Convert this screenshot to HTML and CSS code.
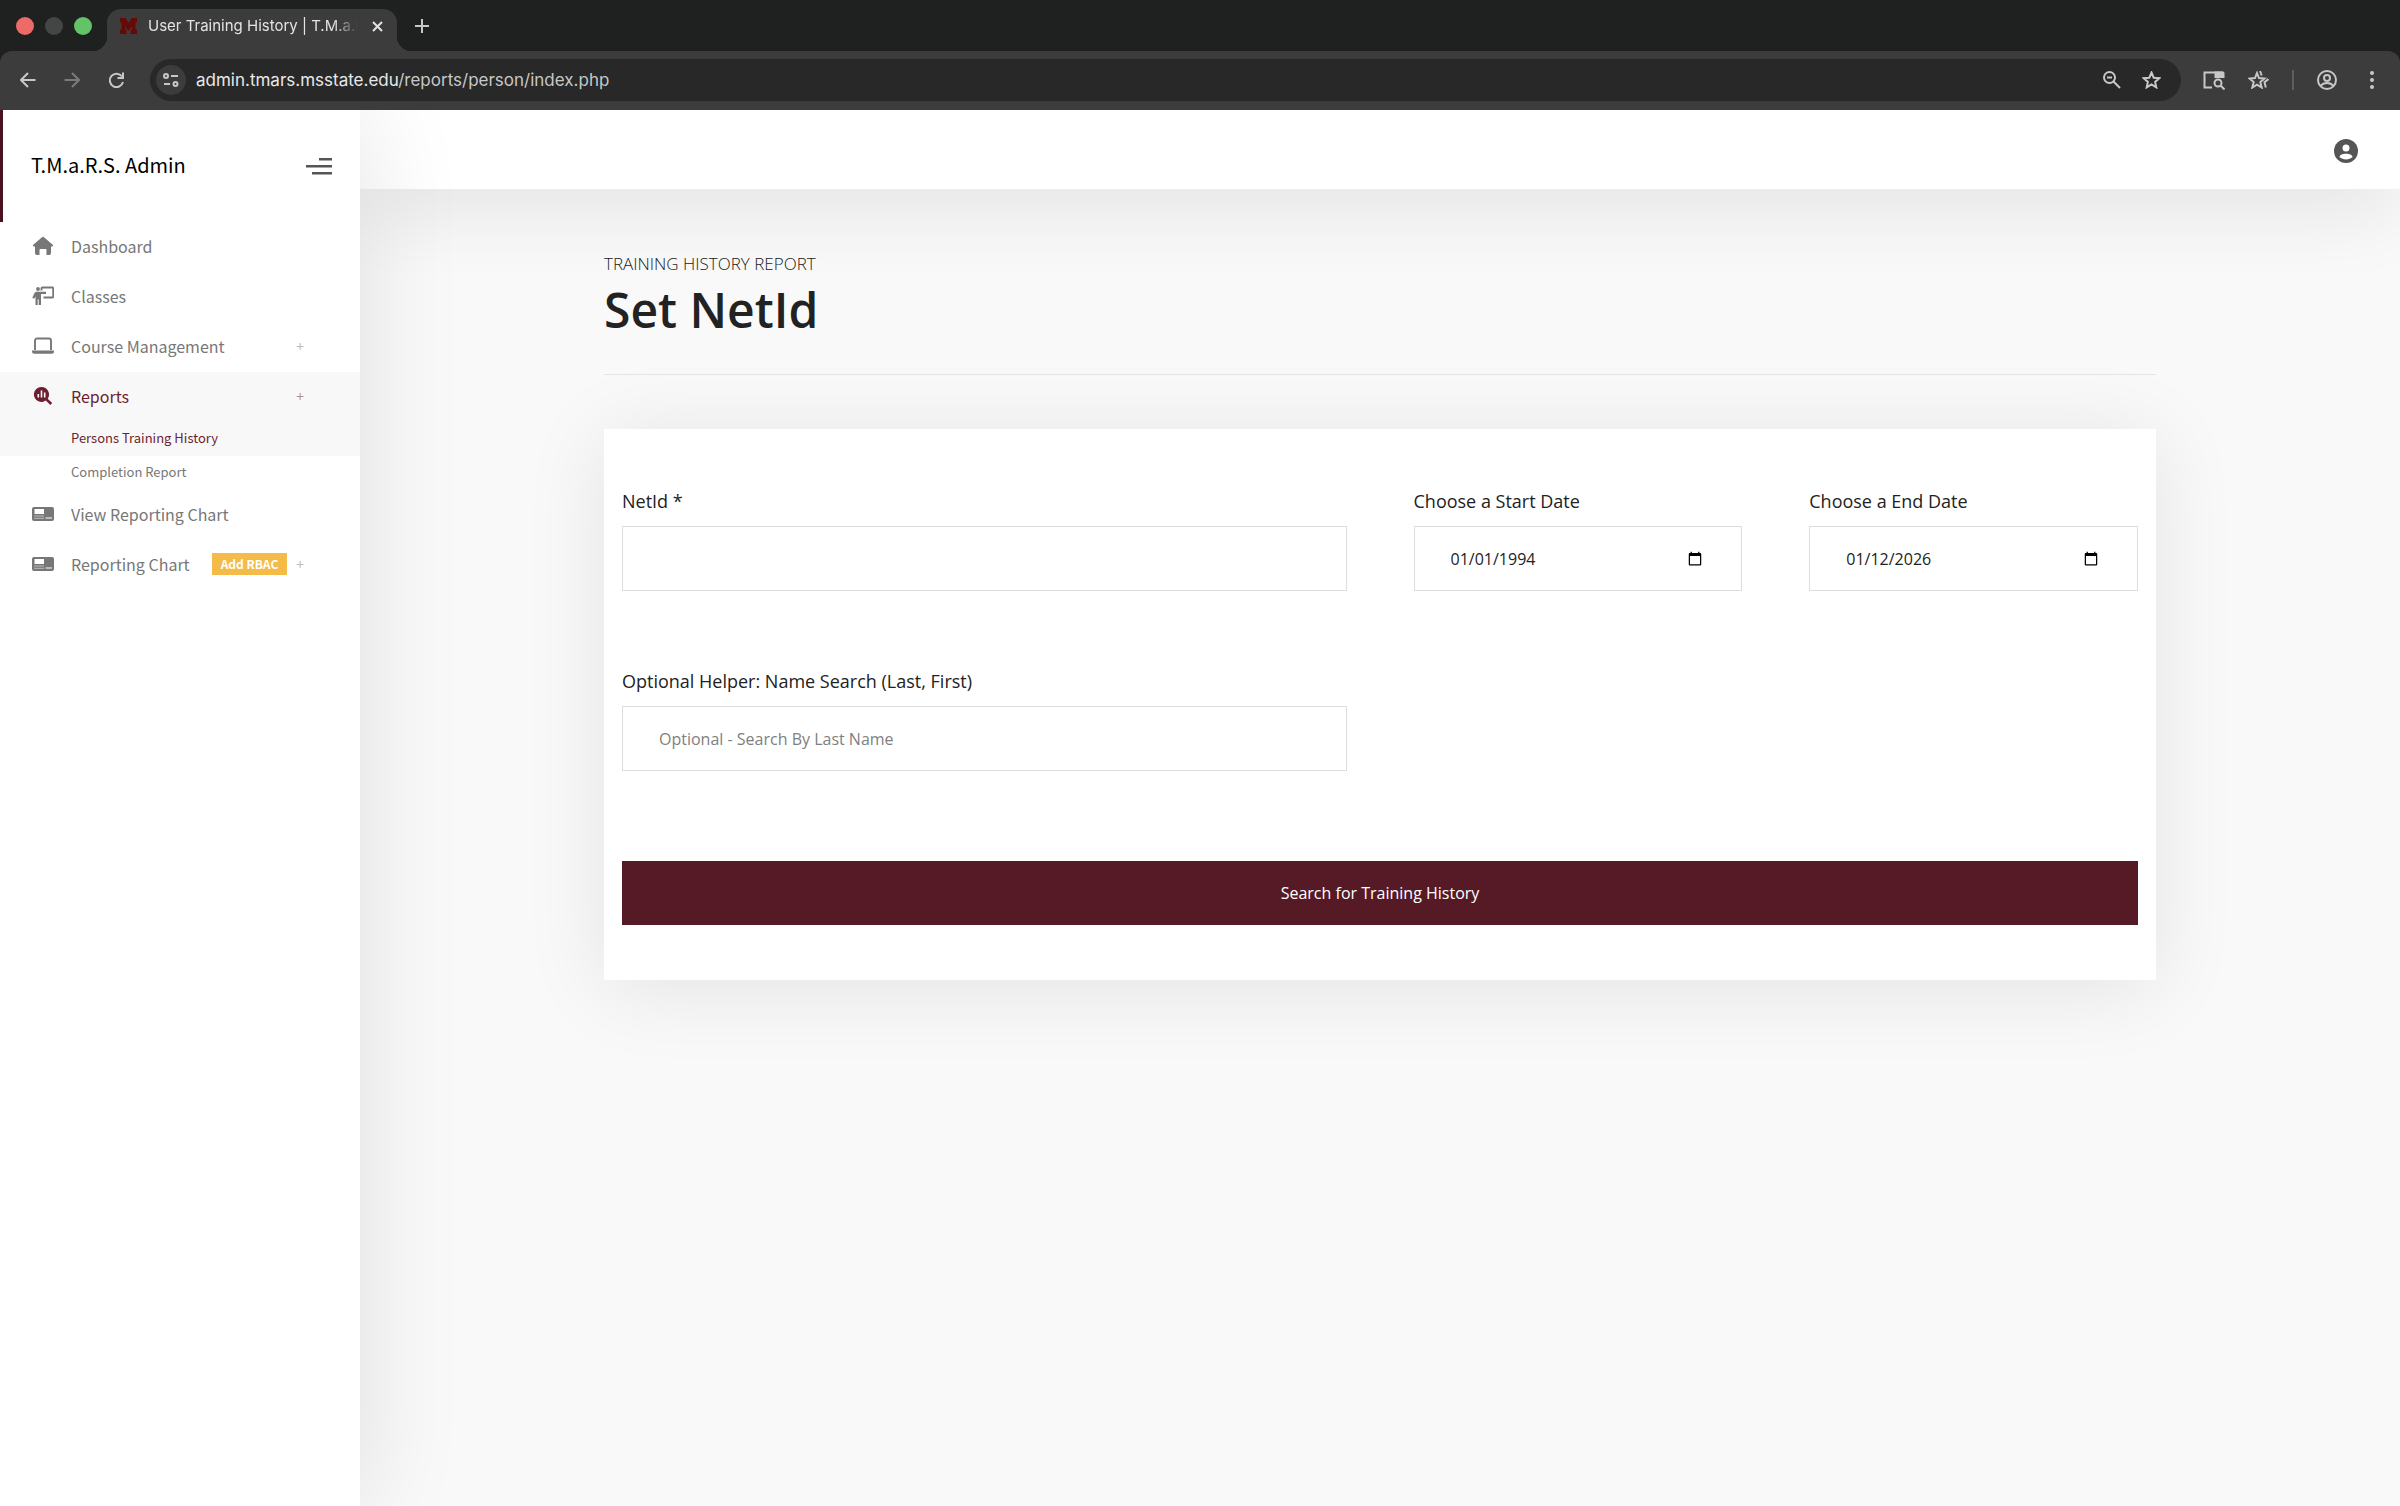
FILE: index.html
```html
<!DOCTYPE html>
<html lang="en-US">
<head>
    <meta charset="UTF-8">
    <meta name="viewport" content="width=device-width, initial-scale=1.0">
    <title>User Training History | T.M.a.R.S.</title>
    <link rel="stylesheet" href="styles.css">
</head>
<body>
    <div class="browser">
        <div class="tab-strip">
            <div class="lights">
                <span class="light red"></span>
                <span class="light gray"></span>
                <span class="light green"></span>
            </div>
            <div class="tab">
                <svg class="favicon" viewBox="0 0 17 16"><path d="M0 0h5.500l3 5 3-5H17v4.500h-1.500v7H17V16h-6.500v-4.500H12V8.500L8.500 13 5 8.500v3h1.500V16H0v-4.500h1.500v-7H0z"/></svg>
                <span class="tab-title">User Training History | T.M.a.R.S.</span>
                <button class="icon-button" aria-label="Close tab">
                    <svg width="11" height="11" viewBox="0 0 11 11" class="line"><path d="M1 1l9 9M10 1l-9 9"/></svg>
                </button>
            </div>
            <button class="icon-button new-tab" aria-label="New tab">
                <svg width="14" height="14" viewBox="0 0 14 14" class="line"><path d="M7 0v14M0 7h14"/></svg>
            </button>
        </div>
        <div class="toolbar">
            <div class="nav-buttons">
                <button class="icon-button" aria-label="Back">
                    <svg width="16" height="16" viewBox="0 0 16 16" class="line"><path d="M15.500 8H1.500M8 1L1 8l7 7"/></svg>
                </button>
                <button class="icon-button" aria-label="Forward" disabled>
                    <svg width="16" height="16" viewBox="0 0 16 16" class="line"><path d="M.5 8h14M8 1l7 7-7 7"/></svg>
                </button>
                <button class="icon-button" aria-label="Reload">
                    <svg width="17" height="17" viewBox="0 0 17 17" class="line"><path d="M14 4.500A6.700 6.700 0 1 0 15 10M15 .5v5.500H9.500"/></svg>
                </button>
            </div>
            <div class="address">
                <button class="icon-button site-info" aria-label="Site information">
                    <svg width="16" height="14" viewBox="0 0 16 14" class="line"><circle cx="3" cy="3" r="2"/><path d="M8 3h7M1 11h6"/><circle cx="12.500" cy="11" r="2"/></svg>
                </button>
                <span class="url">admin.tmars.msstate.edu<span class="path">/reports/person/index.php</span></span>
                <button class="icon-button" aria-label="Zoom">
                    <svg width="18" height="18" viewBox="0 0 18 18" class="line"><circle cx="6.500" cy="6.500" r="5.500"/><path d="M4 6.500h5M10.500 10.500l6.500 6.500"/></svg>
                </button>
                <button class="icon-button" aria-label="Bookmark">
                    <svg width="19" height="18" viewBox="0 0 19 18" class="line"><path d="M9.500 1.500l2.200 5.200 5.600.5-4.200 3.700 1.200 5.500-4.800-2.900-4.800 2.900 1.200-5.500L1.700 7.200l5.600-.5z"/></svg>
                </button>
            </div>
            <div class="tools">
                <button class="icon-button" aria-label="Search tabs">
                    <svg width="22" height="19" viewBox="0 0 22 19" class="line"><path d="M9 16.500H1.500v-15H20"/><path class="solid" d="M11.500.5H20a1.500 1.500 0 0 1 1.500 1.500v5h-10z"/><circle cx="15" cy="12" r="3.500"/><path d="M17.500 14.500l4 4"/></svg>
                </button>
                <button class="icon-button" aria-label="Bookmarks">
                    <svg width="21" height="18" viewBox="0 0 21 18" class="line"><path d="M9 2l2 5 5.500.5-4.200 3.500 1.400 5.500L9 13.600l-4.700 2.900L5.700 11 1.500 7.500 7 7z"/><path d="M12 0l1.700 4.500M20.500 8l-4 3.200 1.300 5.300"/></svg>
                </button>
                <span class="divider"></span>
                <button class="icon-button" aria-label="Profile">
                    <svg width="20" height="20" viewBox="0 0 20 20" class="line"><circle cx="10" cy="10" r="9"/><circle cx="10" cy="8" r="3"/><path d="M3.500 16c3-4 10-4 13 0"/></svg>
                </button>
                <button class="icon-button more" aria-label="Menu">
                    <svg width="4" height="18" viewBox="0 0 4 18"><circle cx="2" cy="2" r="2"/><circle cx="2" cy="9" r="2"/><circle cx="2" cy="16" r="2"/></svg>
                </button>
            </div>
        </div>
    </div>

    <div class="page">
        <aside class="sidebar">
            <div class="brand">
                <a href="#" class="brand-name">T.M.a.R.S. Admin</a>
                <button class="icon-button menu-toggle" aria-label="Toggle menu">
                    <svg width="26" height="17" viewBox="0 0 26 17"><path d="M13 0h13v2.500H13zM0 7h26v2.500H0zM6 14h20v2.500H6z"/></svg>
                </button>
            </div>
            <nav class="menu">
                <a href="#" class="item">
                    <svg class="icon" viewBox="0 0 22 20"><path d="M10 1.200a1.500 1.500 0 0 1 2 0l8.700 7.600c.8.700.4 1.700-.6 1.700H19v6.500a2 2 0 0 1-2 2h-2.500v-5a1 1 0 0 0-1-1h-5a1 1 0 0 0-1 1v5H5a2 2 0 0 1-2-2v-6.500H1.900c-1 0-1.400-1-.6-1.700z"/></svg>
                    <span>Dashboard</span>
                </a>
                <a href="#" class="item">
                    <svg class="icon" viewBox="0 0 22 20"><circle cx="6" cy="3" r="1.900"/><path d="M4.300 5.700H14v2.200H9V19H6.700v-5.500h-1V19H3.500v-8.500l-1.400 2.300-1.800-1.100 2-4.200c.5-1.100 1.100-1.800 2-1.800z"/><path d="M9.500 4.500V2.500a1 1 0 0 1 1-1h9.700a1 1 0 0 1 1 1v8a1 1 0 0 1-1 1H11.500" fill="none" stroke="currentColor" stroke-width="1.900"/></svg>
                    <span>Classes</span>
                </a>
                <a href="#" class="item">
                    <svg class="icon" viewBox="0 0 22 20"><path d="M3 14V4.500a2 2 0 0 1 2-2h12a2 2 0 0 1 2 2V14" fill="none" stroke="currentColor" stroke-width="1.900"/><path d="M0 14.500h22v.8a2.500 2.500 0 0 1-2.500 2.500h-17A2.500 2.500 0 0 1 0 15.300z"/></svg>
                    <span>Course Management</span>
                    <span class="plus">+</span>
                </a>
                <a href="#" class="item active">
                    <svg class="icon" viewBox="0 0 22 20"><path d="M9.500 1a7.500 7.500 0 0 1 6.200 11.700l4.500 4.400-1.900 1.900-4.500-4.400A7.500 7.500 0 1 1 9.500 1z"/><path d="M6.300 8v3.500M9.500 4.500v7M12.700 6.500v5" stroke="#f8f8f8" stroke-width="1.600"/></svg>
                    <span>Reports</span>
                    <span class="plus">+</span>
                </a>
                <a href="#" class="item sub active">Persons Training History</a>
                <a href="#" class="item sub">Completion Report</a>
                <a href="#" class="item">
                    <svg class="icon" viewBox="0 0 22 20"><rect y="3" width="22" height="14" rx="2"/><path d="M2.500 5h9.500v5H2.500zM13.500 13.500h6.500v1h-6.500z" fill="#fff"/><path d="M2.500 12h9.500M2.500 14.300h9.500" stroke="#fff" stroke-width="1" stroke-dasharray="1 1"/></svg>
                    <span>View Reporting Chart</span>
                </a>
                <a href="#" class="item">
                    <svg class="icon" viewBox="0 0 22 20"><rect y="3" width="22" height="14" rx="2"/><path d="M2.500 5h9.500v5H2.500zM13.500 13.500h6.500v1h-6.500z" fill="#fff"/><path d="M2.500 12h9.500M2.500 14.300h9.500" stroke="#fff" stroke-width="1" stroke-dasharray="1 1"/></svg>
                    <span>Reporting Chart</span>
                    <span class="badge">Add RBAC</span>
                    <span class="plus">+</span>
                </a>
            </nav>
        </aside>

        <div class="content">
            <header class="topbar">
                <button class="icon-button account" aria-label="Account">
                    <svg width="24" height="24" viewBox="0 0 24 24"><circle cx="12" cy="12" r="12"/><circle cx="12" cy="9" r="3.500" fill="#fff"/><path d="M5.500 18c0-4.500 13-4.500 13 0-3 3.300-10 3.300-13 0z" fill="#fff"/></svg>
                </button>
            </header>

            <main class="main">
                <p class="kicker">Training History Report</p>
                <h1>Set NetId</h1>
                <hr>

                <form class="card">
                    <div class="field wide">
                        <label for="netid">NetId *</label>
                        <input type="text" id="netid">
                    </div>
                    <div class="field">
                        <label for="start">Choose a Start Date</label>
                        <input type="date" id="start" value="1994-01-01">
                    </div>
                    <div class="field">
                        <label for="end">Choose a End Date</label>
                        <input type="date" id="end" value="2026-01-12">
                    </div>
                    <div class="field wide">
                        <label for="name">Optional Helper: Name Search (Last, First)</label>
                        <input type="text" id="name" placeholder="Optional - Search By Last Name">
                    </div>
                    <button type="submit" class="submit">Search for Training History</button>
                </form>
            </main>
        </div>
    </div>
</body>
</html>
```

FILE: styles.css
```css
* {
    box-sizing: border-box;
}

body {
    margin: 0;
    min-height: 100vh;
    display: flex;
    flex-direction: column;
    font-family: "Open Sans", sans-serif;
    background-color: #f9f9f9;
    color: #222;
}

a {
    color: inherit;
    text-decoration: none;
}

.icon-button {
    display: flex;
    align-items: center;
    justify-content: center;
    padding: 0;
    border: 0;
    background: none;
    color: inherit;
    cursor: pointer;
}

.icon-button:disabled {
    color: #7b7b7b;
}

svg {
    fill: currentColor;
    flex-shrink: 0;
}

.line {
    fill: none;
    stroke: currentColor;
    stroke-width: 2;
}

.line .solid {
    fill: currentColor;
    stroke: none;
}

/* Browser window */
.browser {
    position: relative;
    z-index: 3;
    background-color: #1f2120;
    color: #c7c7c7;
    font-family: Inter, sans-serif;
}

.tab-strip {
    display: flex;
    height: 51px;
    padding-left: 16px;
}

.lights {
    display: flex;
    align-items: center;
    gap: 11px;
    width: 91px;
}

.light {
    width: 18px;
    height: 18px;
    border-radius: 50%;
}

.red {
    background-color: #ee6a67;
}

.gray {
    background-color: #444645;
}

.green {
    background-color: #62c466;
}

.tab {
    position: relative;
    display: flex;
    align-items: center;
    width: 290px;
    margin-top: 9px;
    padding: 0 14px 8px 13px;
    border-radius: 14px 14px 0 0;
    background-color: #3c3c3c;
    color: #e3e3e3;
}

/* Curved feet of the tab */
.tab::before,
.tab::after {
    content: "";
    position: absolute;
    bottom: 0;
    width: 14px;
    height: 14px;
}

.tab::before {
    right: 100%;
    background: radial-gradient(circle at 0 0, transparent 14px, #3c3c3c 14px);
}

.tab::after {
    left: 100%;
    background: radial-gradient(circle at 100% 0, transparent 14px, #3c3c3c 14px);
}

.favicon {
    width: 17px;
    height: 16px;
    margin-right: 11px;
    fill: #660a09;
}

.tab-title {
    flex: 1;
    overflow: hidden;
    margin-right: 14px;
    font-size: 15px;
    line-height: 20px;
    white-space: nowrap;
    mask-image: linear-gradient(to right, #000 88%, transparent);
}

.new-tab {
    margin-left: 18px;
}

.toolbar {
    display: flex;
    align-items: center;
    height: 59px;
    padding: 0 26px 1px 20px;
    border-radius: 12px 12px 0 0;
    background-color: #3c3c3c;
}

.nav-buttons {
    display: flex;
    gap: 28px;
    margin-right: 25px;
}

.address {
    flex: 1;
    display: flex;
    align-items: center;
    gap: 21px;
    height: 42px;
    padding: 0 20px 0 6px;
    border-radius: 21px;
    background-color: #282828;
}

.site-info {
    width: 30px;
    height: 30px;
    border-radius: 50%;
    background-color: #3c3c3c;
}

.url {
    flex: 1;
    margin-left: -11px;
    font-size: 17px;
    line-height: 24px;
    color: #e8e8e8;
}

.path {
    color: #c7c7c7;
}

.tools {
    display: flex;
    align-items: center;
    gap: 23px;
    margin-left: 22px;
}

.more {
    margin-left: 10px;
}

.divider {
    width: 2px;
    height: 20px;
    background-color: #5e5e5e;
}

/* Layout */
.page {
    flex: 1;
    display: flex;
}

.sidebar {
    position: relative;
    z-index: 2;
    width: 360px;
    background-color: #fff;
    box-shadow: 0 0 100px rgba(0, 0, 0, 0.11);
    font-family: "Noto Sans CJK SC", sans-serif;
}

.brand {
    display: flex;
    align-items: center;
    justify-content: space-between;
    height: 112px;
    padding: 0 28px;
    border-left: 3px solid #4a1120;
}

.brand-name {
    padding-bottom: 2px;
    font-size: 20px;
    line-height: 32px;
    color: #000;
}

.menu-toggle {
    color: #555;
}

.item {
    display: flex;
    align-items: center;
    height: 50px;
    padding: 0 56px 3px 32px;
    font-size: 16px;
    color: #777;
}

.item.active {
    background-color: #f8f8f8;
    color: #6d1f2f;
}

.sub {
    height: 34px;
    padding-left: 71px;
    font-size: 13px;
}

.icon {
    width: 22px;
    height: 20px;
    margin-right: 17px;
}

.plus {
    margin-left: auto;
    font-size: 14px;
    opacity: 0.5;
}

.badge {
    margin-left: 22px;
    padding: 0 9px;
    background-color: #f5bb49;
    color: #fff;
    font-size: 12px;
    font-weight: bold;
    line-height: 22px;
}

.content {
    flex: 1;
}

.topbar {
    display: flex;
    align-items: center;
    justify-content: flex-end;
    height: 79px;
    padding: 3px 42px 0;
    background-color: #fff;
    box-shadow: 0 20px 80px rgba(0, 0, 0, 0.09);
}

.account {
    color: #555;
}

.main {
    max-width: 1632px;
    margin: 0 auto;
    padding: 62px 40px;
}

.kicker {
    margin: 0;
    font-size: 17px;
    font-weight: 300;
    line-height: 26px;
    text-transform: uppercase;
}

h1 {
    margin: 0;
    font-size: 48px;
    font-weight: 600;
    line-height: 66px;
}

hr {
    margin: 31px 0 54px;
    border: 0;
    border-top: 1px solid #e4e4e4;
}

/* Search form */
.card {
    display: grid;
    grid-template-columns: repeat(4, 1fr);
    gap: 77px 67px;
    padding: 59px 18px 55px;
    background-color: #fff;
    box-shadow: 0 8px 80px rgba(0, 0, 0, 0.09);
}

.wide {
    grid-column: span 2;
}

.field label {
    display: block;
    margin-bottom: 12px;
    font-size: 18px;
    line-height: 26px;
}

.field input {
    width: 100%;
    height: 65px;
    padding: 0 36px;
    border: 1px solid #ddd;
    background-color: #fff;
    color: #222;
    font-family: inherit;
    font-size: 16px;
}

.field input::placeholder {
    color: #808080;
}

.field input::-webkit-datetime-edit-month-field,
.field input::-webkit-datetime-edit-day-field,
.field input::-webkit-datetime-edit-year-field {
    padding: 0;
}

.submit {
    grid-column: 1 / -1;
    height: 64px;
    margin-top: 13px;
    border: 0;
    background-color: #551a25;
    color: #fff;
    font-family: inherit;
    font-size: 16px;
    cursor: pointer;
}
```
